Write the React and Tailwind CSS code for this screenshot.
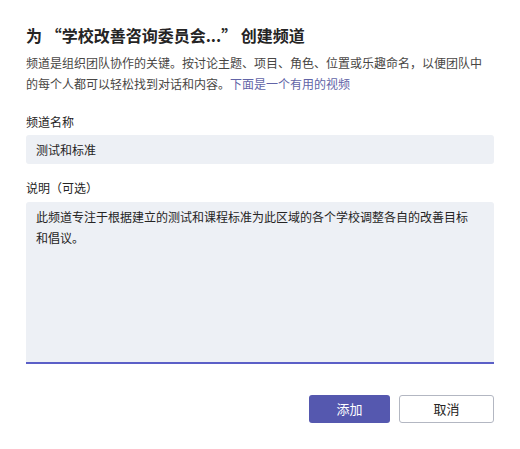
export default function App() {
  return (
    <div
      className="h-[449px] w-[520px] bg-white px-[26px] pt-[23px] text-[#252424]"
      style={{ fontFamily: '"Noto Sans CJK SC", "Noto Sans", sans-serif' }}
    >
      <h1 className="text-[16px] font-bold leading-[24px]">
        为 “学校改善咨询委员会...” 创建频道
      </h1>

      <p className="mt-[5px] max-w-[460px] text-[12px] leading-[21px] text-[#484644]">
        频道是组织团队协作的关键。按讨论主题、项目、角色、位置或乐趣命名，以便团队中的每个人都可以轻松找到对话和内容。
        <span className="text-[#6264a7]">下面是一个有用的视频</span>
      </p>

      <div className="mt-[19px]">
        <label className="block text-[12px] leading-[18px] text-[#252424]">频道名称</label>
        <div className="mt-[4px] flex h-[29px] items-center rounded-[3px] bg-[#edf0f5] px-[10px] text-[12px] text-[#252424]">
          测试和标准
        </div>
      </div>

      <div className="mt-[15px]">
        <label className="block text-[12px] leading-[18px] text-[#252424]">说明（可选）</label>
        <div className="mt-[5px] h-[162px] rounded-t-[3px] border-b-2 border-[#5b5fc7] bg-[#edf0f5] pl-[10px] pr-[20px] pt-[4px] text-[12px] leading-[21px] text-[#252424]">
          此频道专注于根据建立的测试和课程标准为此区域的各个学校调整各自的改善目标和倡议。
        </div>
      </div>

      <div className="mt-[31px] flex justify-end gap-[9px]">
        <button className="h-[28px] w-[81px] rounded-[3px] bg-[#5558af] text-[13px] text-white">
          添加
        </button>
        <button className="h-[28px] w-[95px] rounded-[3px] border border-[#b3b7c2] bg-white text-[13px] text-[#252424]">
          取消
        </button>
      </div>
    </div>
  );
}
